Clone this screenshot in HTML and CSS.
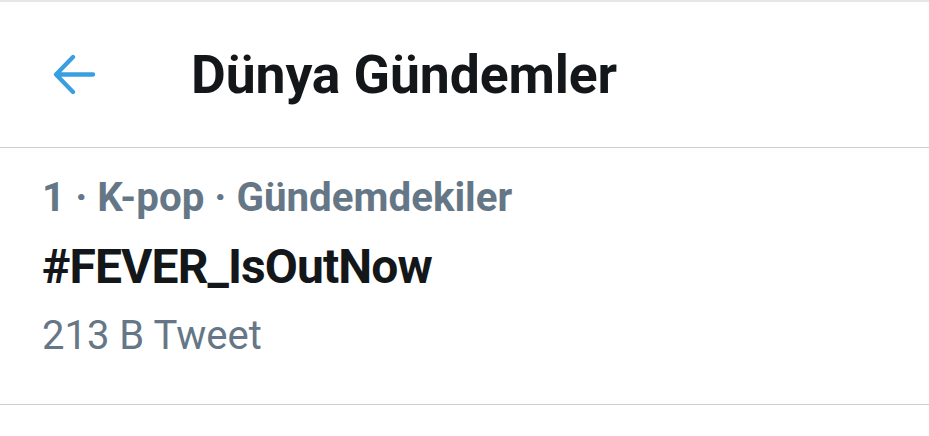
FILE: index.html
```html
<!DOCTYPE html>
<html lang="tr">
<head>
<meta charset="utf-8">
<link rel="stylesheet" href="styles.css">
</head>
<body>
<div class="screen">
  <header class="header">
    <svg class="back" viewBox="0 0 42 42" width="42" height="42" aria-hidden="true">
      <path d="M40 20.5H5M20 3L3 20.5L20 38" fill="none" stroke="#3a9fe0" stroke-width="4.3" stroke-linecap="round" stroke-linejoin="round"/>
    </svg>
    <h1 class="title">Dünya Gündemler</h1>
  </header>
  <section class="trend">
    <div class="meta">1 · K-pop · Gündemdekiler</div>
    <div class="tag">#FEVER_IsOutNow</div>
    <div class="count">213 B Tweet</div>
  </section>
</div>
</body>
</html>
```
FILE: styles.css
```css
html, body {
  margin: 0;
  padding: 0;
  background: #ffffff;
}
body {
  font-family: Roboto, "Noto Sans", Arial, sans-serif;
}
.screen {
  width: 929px;
  height: 436px;
  border-top: 2px solid #e6e6e6;
  box-sizing: border-box;
}
.header {
  display: flex;
  align-items: center;
  padding-left: 53px;
  border-bottom: 1px solid #cfcfcf;
  box-sizing: border-box;
  height: 146px;
}
.back {
  display: block;
  flex: none;
}
.title {
  margin: 0 0 0 96px;
  font-size: 53.5px;
  font-weight: 700;
  color: #14171a;
  line-height: 62px;
  letter-spacing: -0.1px;
}
.trend {
  padding: 15px 0 34px 42px;
  border-bottom: 1px solid #cfcfcf;
}
.meta, .tag, .count {
  line-height: 69px;
  white-space: nowrap;
}
.meta {
  font-size: 40.3px;
  font-weight: 700;
  color: #657786;
}
.tag {
  font-size: 48px;
  font-weight: 700;
  color: #14171a;
  letter-spacing: -0.9px;
}
.count {
  font-size: 40px;
  font-weight: 400;
  color: #657786;
}
```
